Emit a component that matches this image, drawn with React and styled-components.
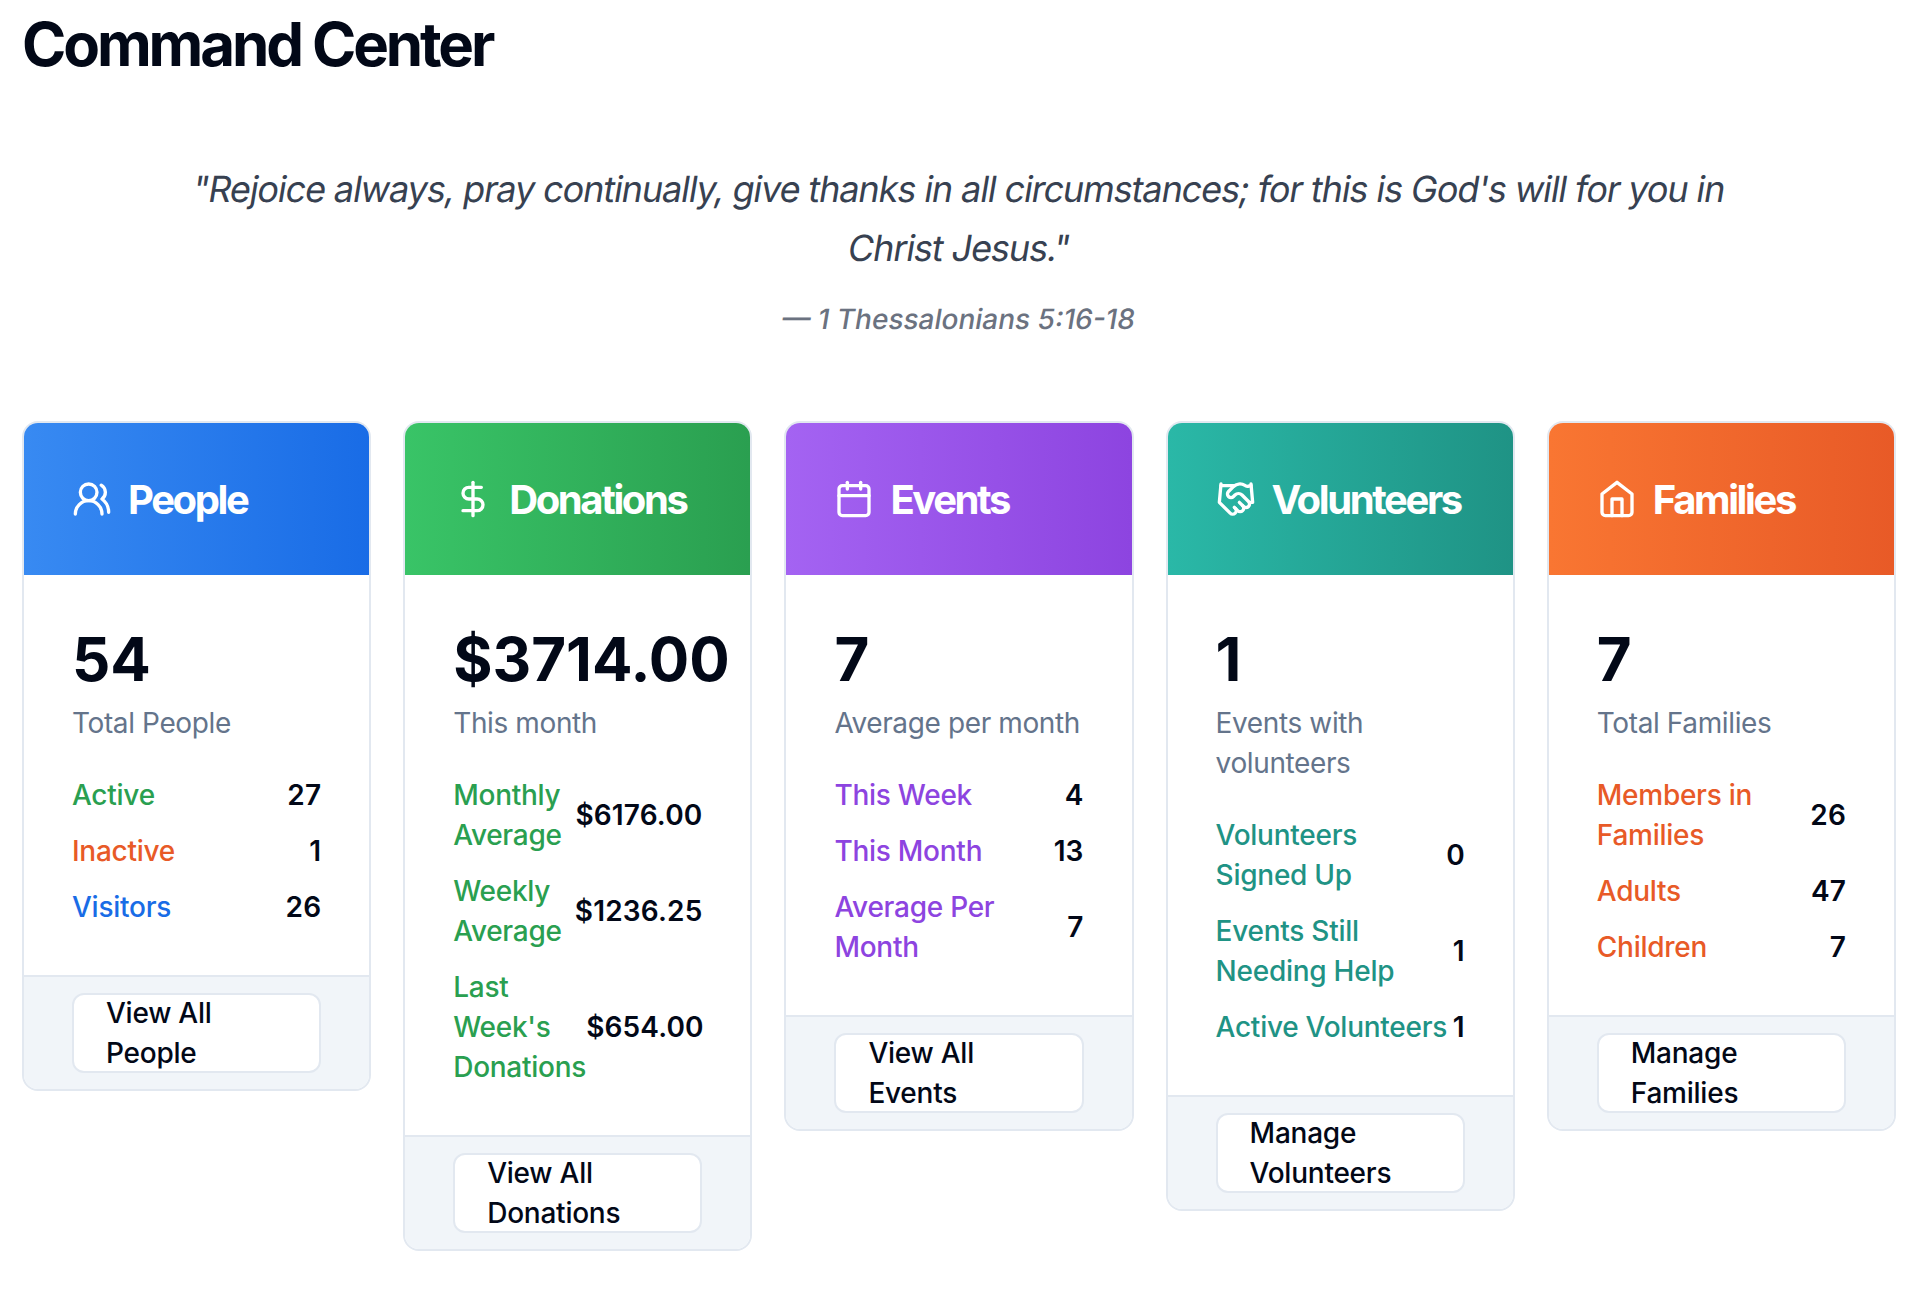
import React from "react";
import styled, { createGlobalStyle } from "styled-components";
import { UsersRound, DollarSign, Calendar, Handshake } from "lucide-react";

const GlobalStyle = createGlobalStyle`
  *, *::before, *::after { box-sizing: border-box; }
  body {
    margin: 0;
    background: #fff;
    color: #020817;
    font-family: Inter, "Liberation Sans", sans-serif;
    font-size: 28px;
    line-height: 40px;
    -webkit-font-smoothing: antialiased;
  }
  h1, h2, p, blockquote { margin: 0; }
`;

const Page = styled.main`
  padding: 8px 22px 0;
`;

const Title = styled.h1`
  font-size: 60px;
  line-height: 72px;
  font-weight: 700;
  letter-spacing: -0.052em;
`;

const Verse = styled.blockquote`
  margin: 80px auto 0;
  text-align: center;
`;

/* Slanted roman: keeps the two-storey "a" and the plain "f". */
const VerseLine = styled.p`
  font-size: 36px;
  line-height: 58.5px;
  letter-spacing: -0.0303em;
  white-space: nowrap;
  color: #374151;
  transform: skewX(-9.5deg);
`;

const VerseSource = styled.p`
  margin-top: 22px;
  font-weight: 500;
  color: #6b7280;
  transform: skewX(-9.5deg);
`;

const CardGrid = styled.section`
  display: grid;
  grid-template-columns: repeat(5, minmax(0, 1fr));
  gap: 32px;
  align-items: start;
  margin-top: 82px;
`;

const Card = styled.article`
  overflow: hidden;
  border: 2px solid #e2e8f0;
  border-radius: 16px;
  background: #fff;
`;

const CardHeader = styled.header`
  padding: 48px;
  background: linear-gradient(to right, ${(p) => p.$from}, ${(p) => p.$to});
  color: #fff;
`;

const CardTitle = styled.h2`
  display: flex;
  align-items: center;
  gap: 16px;
  height: 56px;
  font-size: 40px;
  line-height: 57px;
  font-weight: 700;
  letter-spacing: -0.06em;

  svg { flex: none; }
`;

const CardBody = styled.div`
  padding: 48px;
`;

const Total = styled.div`
  font-size: 60px;
  line-height: 72px;
  font-weight: 700;
`;

const Caption = styled.p`
  margin-top: 8px;
  letter-spacing: -0.38px;
  color: #64748b;
`;

const StatList = styled.div`
  display: flex;
  flex-direction: column;
  gap: 16px;
  margin-top: 32px;
`;

const Stat = styled.div`
  display: flex;
  align-items: center;
  justify-content: space-between;
`;

const StatLabel = styled.span`
  font-weight: 500;
  letter-spacing: -0.26px;
  color: ${(p) => p.$color};
`;

const StatValue = styled.span`
  font-weight: 600;
  letter-spacing: 0.15px;
`;

const CardFooter = styled.footer`
  padding: 16px 48px;
  border-top: 2px solid #e2e8f0;
  background: #f1f5f9;
`;

const LinkButton = styled.button`
  display: flex;
  align-items: center;
  width: 100%;
  height: 80px;
  padding: 0 32px;
  border: 2px solid #e2e8f0;
  border-radius: 12px;
  background: #fff;
  color: #020817;
  font: inherit;
  font-weight: 500;
  letter-spacing: -0.24px;
  text-align: left;
`;

function HomeIcon({ size }) {
  return (
    <svg
      width={size}
      height={size}
      viewBox="0 0 24 24"
      fill="none"
      stroke="currentColor"
      strokeWidth="2"
      strokeLinecap="round"
      strokeLinejoin="round"
    >
      <path d="m3 9 9-7 9 7v11a2 2 0 0 1-2 2H5a2 2 0 0 1-2-2z" />
      <polyline points="9 22 9 12 15 12 15 22" />
    </svg>
  );
}

const green = "#2a9f50";
const orange = "#e85a27";
const blue = "#196ce6";
const purple = "#8d44e0";
const teal = "#1f9385";

const cards = [
  {
    title: "People", icon: UsersRound, from: "#388af2", to: blue,
    total: "54", caption: "Total People", action: "View All People",
    stats: [["Active", "27", green], ["Inactive", "1", orange], ["Visitors", "26", blue]],
  },
  {
    title: "Donations", icon: DollarSign, from: "#39c467", to: green,
    total: "$3714.00", caption: "This month", action: "View All Donations",
    stats: [["Monthly Average", "$6176.00", green], ["Weekly Average", "$1236.25", green], ["Last Week's Donations", "$654.00", green]],
  },
  {
    title: "Events", icon: Calendar, from: "#a463f2", to: purple,
    total: "7", caption: "Average per month", action: "View All Events",
    stats: [["This Week", "4", purple], ["This Month", "13", purple], ["Average Per Month", "7", purple]],
  },
  {
    title: "Volunteers", icon: Handshake, from: "#2ab8a7", to: teal,
    total: "1", caption: "Events with volunteers", action: "Manage Volunteers",
    stats: [["Volunteers Signed Up", "0", teal], ["Events Still Needing Help", "1", teal], ["Active Volunteers", "1", teal]],
  },
  {
    title: "Families", icon: HomeIcon, from: "#f97632", to: orange,
    total: "7", caption: "Total Families", action: "Manage Families",
    stats: [["Members in Families", "26", orange], ["Adults", "47", orange], ["Children", "7", orange]],
  },
];

function SummaryCard({ title, icon: Icon, from, to, total, caption, stats, action }) {
  return (
    <Card>
      <CardHeader $from={from} $to={to}>
        <CardTitle>
          <Icon size={40} />
          {title}
        </CardTitle>
      </CardHeader>
      <CardBody>
        <Total>{total}</Total>
        <Caption>{caption}</Caption>
        <StatList>
          {stats.map(([label, value, color]) => (
            <Stat key={label}>
              <StatLabel $color={color}>{label}</StatLabel>
              <StatValue>{value}</StatValue>
            </Stat>
          ))}
        </StatList>
      </CardBody>
      <CardFooter>
        <LinkButton>{action}</LinkButton>
      </CardFooter>
    </Card>
  );
}

export default function App() {
  return (
    <>
      <GlobalStyle />
      <Page>
        <Title>Command Center</Title>
        <Verse>
          <VerseLine>
            "Rejoice always, pray continually, give thanks in all circumstances; for this is God's will for you in
          </VerseLine>
          <VerseLine>Christ Jesus."</VerseLine>
          <VerseSource>— 1 Thessalonians 5:16-18</VerseSource>
        </Verse>
        <CardGrid>
          {cards.map((card) => (
            <SummaryCard key={card.title} {...card} />
          ))}
        </CardGrid>
      </Page>
    </>
  );
}
